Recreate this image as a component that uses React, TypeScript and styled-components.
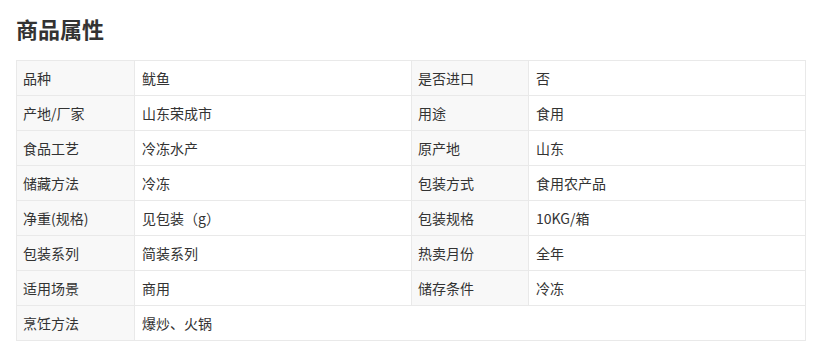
import { createGlobalStyle, styled } from "styled-components";

const GlobalStyle = createGlobalStyle`
  body {
    margin: 0;
    background: #ffffff;
    font-family: "Noto Sans CJK SC", "Noto Sans", sans-serif;
    color: #333333;
  }
`;

const Page = styled.div`
  padding: 13px 16px 0 16px;
`;

const Title = styled.h2`
  margin: 0 0 17px 0;
  font-size: 22px;
  line-height: 30px;
  font-weight: bold;
  color: #333333;
`;

const Table = styled.table`
  width: 789px;
  border-collapse: collapse;
  table-layout: fixed;
  font-size: 14px;
`;

const Cell = styled.td<{ $label?: boolean }>`
  height: 34px;
  padding: 0 0 0 ${(p) => (p.$label ? 6 : 7)}px;
  border: 1px solid #e9e9e9;
  background-color: ${(p) => (p.$label ? "#f8f8f8" : "#ffffff")};
  color: #333333;
  line-height: 20px;
  vertical-align: middle;
  white-space: nowrap;
`;

const rows: [string, string, string?, string?][] = [
  ["品种", "鱿鱼", "是否进口", "否"],
  ["产地/厂家", "山东荣成市", "用途", "食用"],
  ["食品工艺", "冷冻水产", "原产地", "山东"],
  ["储藏方法", "冷冻", "包装方式", "食用农产品"],
  ["净重(规格)", "见包装（g）", "包装规格", "10KG/箱"],
  ["包装系列", "简装系列", "热卖月份", "全年"],
  ["适用场景", "商用", "储存条件", "冷冻"],
  ["烹饪方法", "爆炒、火锅"],
];

export default function App() {
  return (
    <Page>
      <GlobalStyle />
      <Title>商品属性</Title>
      <Table>
        <colgroup>
          <col style={{ width: 118 }} />
          <col style={{ width: 277 }} />
          <col style={{ width: 117 }} />
          <col style={{ width: 277 }} />
        </colgroup>
        <tbody>
          {rows.map(([k1, v1, k2, v2]) => (
            <tr key={k1}>
              <Cell $label>{k1}</Cell>
              {k2 ? (
                <>
                  <Cell>{v1}</Cell>
                  <Cell $label>{k2}</Cell>
                  <Cell>{v2}</Cell>
                </>
              ) : (
                <Cell colSpan={3}>{v1}</Cell>
              )}
            </tr>
          ))}
        </tbody>
      </Table>
    </Page>
  );
}
